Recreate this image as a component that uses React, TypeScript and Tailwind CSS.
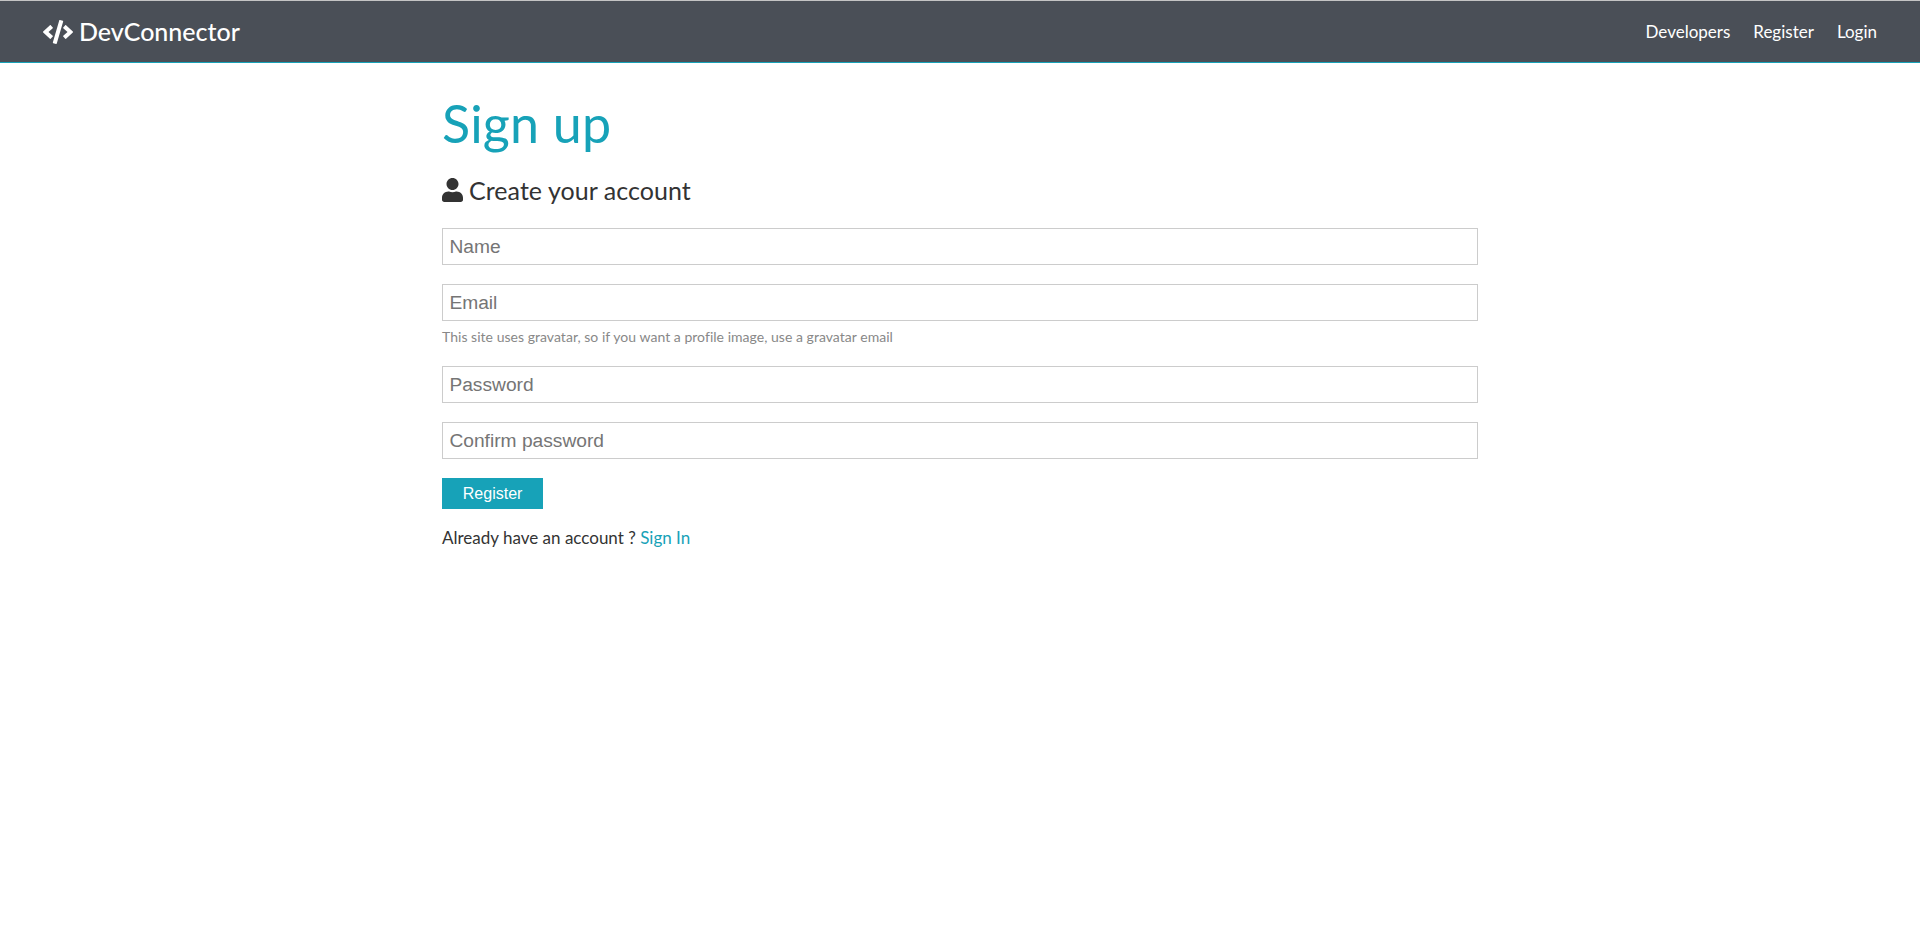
import { FaCode, FaUser } from 'react-icons/fa';

const inputClass =
  'block h-[37px] w-full border border-[#ccc] px-[6.4px] text-[19.2px] font-["Liberation_Sans",sans-serif] placeholder:text-[#757575]';

function Navbar() {
  return (
    <nav className="flex h-[63px] items-center justify-between border-t border-b border-t-[#c4c4c4] border-b-[#17a2b8] bg-[#4a4f57] px-[43px] text-white">
      <a href="#" className="flex items-center gap-[6px] text-[25px] font-medium">
        <FaCode className="h-[24px] w-[30px]" />
        <span className="pb-[2px]">DevConnector</span>
      </a>
      <ul className="flex gap-[23px] text-[17px]">
        <li>Developers</li>
        <li>Register</li>
        <li>Login</li>
      </ul>
    </nav>
  );
}

export default function App() {
  return (
    <div className='min-h-[951px] bg-white font-["Lato",sans-serif] text-[17px] leading-[1.6] text-[#333]'>
      <Navbar />
      <main className="mx-auto mt-[32px] max-w-[1100px] px-8">
        <h1 className="mb-[18px] text-[52px] leading-[57.6px] tracking-[0.2px] text-[#17a2b8]">Sign up</h1>
        <p className="mb-[19px] flex items-center gap-[6px] text-[25px] leading-[38.4px] tracking-[0.05px]">
          <FaUser className="h-[24px] w-[21px]" />
          Create your account
        </p>
        <form>
          <div className="mb-[19px]">
            <input className={inputClass} type="text" placeholder="Name" />
          </div>
          <div className="mb-[19px]">
            <input className={inputClass} type="email" placeholder="Email" />
            <small className="mt-[5px] block text-[14px] leading-[21px] tracking-[0.03px] text-[#888]">
              This site uses gravatar, so if you want a profile image, use a gravatar email
            </small>
          </div>
          <div className="mb-[19px]">
            <input className={inputClass} type="password" placeholder="Password" />
          </div>
          <div className="mb-[19px]">
            <input className={inputClass} type="password" placeholder="Confirm password" />
          </div>
          <button
            type="submit"
            className='block h-[31px] bg-[#17a2b8] px-[20.8px] font-["Liberation_Sans",sans-serif] text-[16px] text-white'
          >
            Register
          </button>
        </form>
        <p className="my-[15px]">
          Already have an account ? <a href="#" className="text-[#17a2b8]">Sign In</a>
        </p>
      </main>
    </div>
  );
}
